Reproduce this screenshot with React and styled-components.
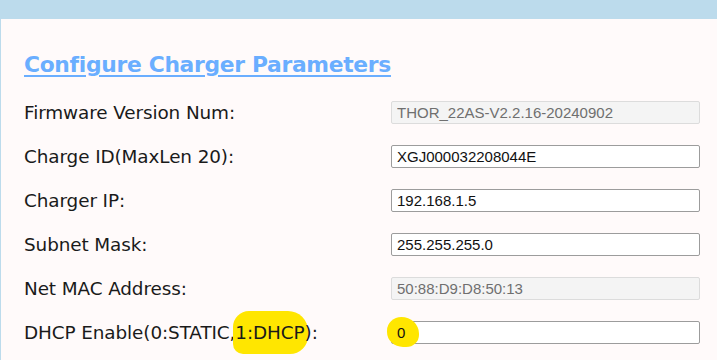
import React from "react";
import styled, { createGlobalStyle } from "styled-components";

const GlobalStyle = createGlobalStyle`
  html, body {
    margin: 0;
    padding: 0;
    background: #fffafa;
  }
`;

const TopBar = styled.div`
  height: 19px;
  background: #bcdbec;
`;

const Panel = styled.div`
  border-left: 1px solid #bcdbec;
  background: #fffafa;
  padding: 32px 0 0 23px;
  height: 341px;
  box-sizing: border-box;
  font-family: "DejaVu Sans", Verdana, sans-serif;
`;

const Title = styled.h2`
  margin: 0 0 11px 0;
  font-size: 21.8px;
  font-weight: bold;
  color: #6aaeff;
  text-decoration: underline;
  text-decoration-thickness: 2px;
  text-underline-offset: 3px;
  letter-spacing: -0.3px;
  line-height: 28px;
`;

const Form = styled.div`
  display: grid;
  grid-template-columns: 367px 309px;
  grid-auto-rows: 44px;
  align-items: center;
`;

const Label = styled.label`
  font-size: 18.4px;
  color: #1a1a1a;
  white-space: nowrap;
  letter-spacing: -0.1px;
`;

const Field = styled.div`
  position: relative;
  height: 23px;
`;

const Input = styled.input`
  box-sizing: border-box;
  width: 309px;
  height: 23px;
  padding: 0 5px;
  font-family: "Liberation Sans", Arial, sans-serif;
  font-size: 15px;
  color: ${(p) => (p.disabled ? "#6f6f6f" : "#111")};
  background: ${(p) => (p.disabled ? "#f4f4f4" : "#fff")};
  border: 1px solid ${(p) => (p.disabled ? "#dcdcdc" : "#9c9c9c")};
  border-radius: 2px;
  outline: none;
`;

const Marker = styled.span`
  background: #ffe600;
  border-radius: 16px 20px 18px 10px;
  padding: 11px 3px 11px 2px;
  margin: 0 -3px 0 -2px;
`;

const InputMarker = styled.span`
  position: absolute;
  left: -4px;
  top: -4px;
  width: 32px;
  height: 30px;
  background: #ffe600;
  border-radius: 45% 55% 40% 50%;
  pointer-events: none;
`;

const OverlayText = styled.span`
  position: absolute;
  left: 6px;
  top: 0;
  line-height: 23px;
  font-family: "Liberation Sans", Arial, sans-serif;
  font-size: 15px;
  color: #111;
`;

const rows = [
  { label: "Firmware Version Num:", value: "THOR_22AS-V2.2.16-20240902", disabled: true },
  { label: "Charge ID(MaxLen 20):", value: "XGJ000032208044E" },
  { label: "Charger IP:", value: "192.168.1.5" },
  { label: "Subnet Mask:", value: "255.255.255.0" },
  { label: "Net MAC Address:", value: "50:88:D9:D8:50:13", disabled: true },
];

export default function App() {
  return (
    <>
      <GlobalStyle />
      <TopBar />
      <Panel>
        <Title>Configure Charger Parameters</Title>
        <Form>
          {rows.map((r) => (
            <React.Fragment key={r.label}>
              <Label>{r.label}</Label>
              <Field>
                <Input defaultValue={r.value} disabled={r.disabled} readOnly />
              </Field>
            </React.Fragment>
          ))}
          <Label>
            DHCP Enable(0:STATIC,<Marker>1:DHCP</Marker>):
          </Label>
          <Field>
            <Input defaultValue="" readOnly />
            <InputMarker />
            <OverlayText>0</OverlayText>
          </Field>
        </Form>
      </Panel>
    </>
  );
}
